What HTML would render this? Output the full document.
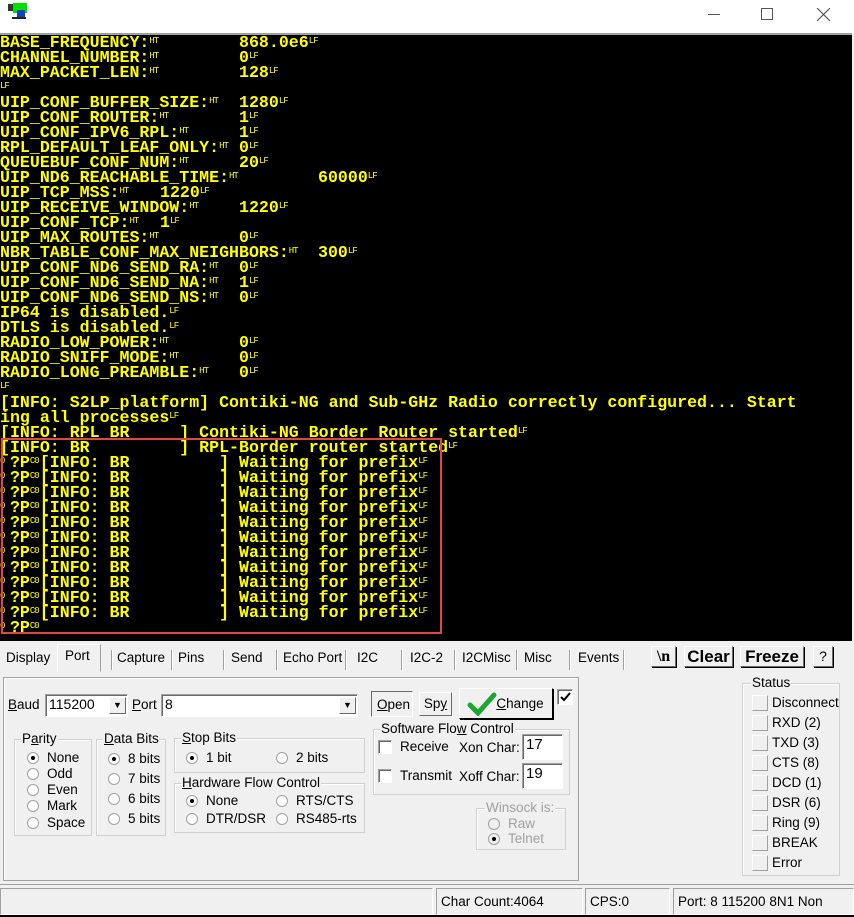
<!DOCTYPE html>
<html><head><meta charset="utf-8"><style>
*{margin:0;padding:0;box-sizing:border-box}
body{width:854px;height:917px;background:#f0f0f0;position:relative;overflow:hidden;font-family:"Liberation Sans",sans-serif;font-size:14px;color:#000}
.a{position:absolute}
#title{left:0;top:0;width:854px;height:33px;background:#fff}
#term{left:0;top:33px;width:852px;height:608px;background:#000;border-top:2px solid #a0a0a0}
.l{position:absolute;left:0;height:15px;line-height:15px;font-family:"Liberation Mono",monospace;font-weight:bold;font-size:16.6px;color:#ffff00;white-space:pre;letter-spacing:0}
.l i{font-style:normal;font-weight:normal;font-size:9px;display:inline-block;width:9.96px;vertical-align:top;line-height:12px;letter-spacing:-1px}
.v{position:absolute;top:0}
#red{left:1px;top:438px;width:441px;height:196px;border:2px solid #e04848}
.tab{position:absolute;top:650px;font-size:13.5px}
.sep{position:absolute;top:650px;width:2px;height:20px;border-left:1px solid #a0a0a0;border-right:1px solid #fff}
.btn{position:absolute;background:#f0f0f0;border:1px solid;border-color:#fff #696969 #696969 #fff;box-shadow:1px 1px 0 #000;text-align:center}
.gb{position:absolute;border:1px solid #d0d0d0;box-shadow:inset 1px 1px 0 #fff}
.gl{position:absolute;background:#f0f0f0;padding:0 1px;font-size:13.5px;line-height:14px;top:-8px;left:6px}
.rd{position:absolute;width:12px;height:12px;border-radius:50%;border:1px solid #a0a0a0;background:#fff}
.rd.on::after{content:"";position:absolute;left:3px;top:3px;width:4px;height:4px;border-radius:50%;background:#000}
.t{position:absolute;font-size:13.5px;white-space:nowrap}
.cb{position:absolute;width:14px;height:14px;border:1px solid;border-color:#a0a0a0 #fff #fff #a0a0a0;background:#fff;box-shadow:inset 1px 1px 0 #696969}
.in{position:absolute;background:#fff;border:1px solid;border-color:#a0a0a0 #fff #fff #a0a0a0;box-shadow:inset 1px 1px 0 #696969;font-size:14px;padding:1px 3px}
.sb{position:absolute;left:752px;width:16px;height:16px;border:1px solid;border-color:#fff #a0a0a0 #a0a0a0 #fff}
.sp{position:absolute;top:888px;height:27px;border:1px solid;border-color:#a0a0a0 #fff #fff #a0a0a0;font-size:13.5px;line-height:25px;padding-left:4px}
u{text-decoration:underline}
</style></head><body>
<div id="title" class="a">
 <div class="a" style="left:8px;top:4px;width:8px;height:7px;background:#333"></div>
 <div class="a" style="left:13px;top:3px;width:14px;height:10px;background:#00e000"></div>
 <div class="a" style="left:17px;top:10px;width:8px;height:7px;background:#1040c0"></div>
 <div class="a" style="left:12px;top:17px;width:14px;height:2px;background:#222"></div>
 <div class="a" style="left:708px;top:14px;width:12px;height:1px;background:#555"></div>
 <div class="a" style="left:761px;top:8px;width:12px;height:12px;border:1px solid #555"></div>
 <svg class="a" style="left:817px;top:8px" width="13" height="13"><path d="M0 0L13 13M13 0L0 13" stroke="#444" stroke-width="1"/></svg>
</div>
<div id="term" class="a">
<div class="l" style="top:0px">BASE_FREQUENCY:<i>HT</i><span class="v" style="left:239px">868.0e6<i>LF</i></span></div>
<div class="l" style="top:15px">CHANNEL_NUMBER:<i>HT</i><span class="v" style="left:239px">0<i>LF</i></span></div>
<div class="l" style="top:30px">MAX_PACKET_LEN:<i>HT</i><span class="v" style="left:239px">128<i>LF</i></span></div>
<div class="l" style="top:45px"><i>LF</i></div>
<div class="l" style="top:60px">UIP_CONF_BUFFER_SIZE:<i>HT</i><span class="v" style="left:239px">1280<i>LF</i></span></div>
<div class="l" style="top:75px">UIP_CONF_ROUTER:<i>HT</i><span class="v" style="left:239px">1<i>LF</i></span></div>
<div class="l" style="top:90px">UIP_CONF_IPV6_RPL:<i>HT</i><span class="v" style="left:239px">1<i>LF</i></span></div>
<div class="l" style="top:105px">RPL_DEFAULT_LEAF_ONLY:<i>HT</i><span class="v" style="left:239px">0<i>LF</i></span></div>
<div class="l" style="top:120px">QUEUEBUF_CONF_NUM:<i>HT</i><span class="v" style="left:239px">20<i>LF</i></span></div>
<div class="l" style="top:135px">UIP_ND6_REACHABLE_TIME:<i>HT</i><span class="v" style="left:318px">60000<i>LF</i></span></div>
<div class="l" style="top:150px">UIP_TCP_MSS:<i>HT</i><span class="v" style="left:160px">1220<i>LF</i></span></div>
<div class="l" style="top:165px">UIP_RECEIVE_WINDOW:<i>HT</i><span class="v" style="left:239px">1220<i>LF</i></span></div>
<div class="l" style="top:180px">UIP_CONF_TCP:<i>HT</i><span class="v" style="left:160px">1<i>LF</i></span></div>
<div class="l" style="top:195px">UIP_MAX_ROUTES:<i>HT</i><span class="v" style="left:239px">0<i>LF</i></span></div>
<div class="l" style="top:210px">NBR_TABLE_CONF_MAX_NEIGHBORS:<i>HT</i><span class="v" style="left:318px">300<i>LF</i></span></div>
<div class="l" style="top:225px">UIP_CONF_ND6_SEND_RA:<i>HT</i><span class="v" style="left:239px">0<i>LF</i></span></div>
<div class="l" style="top:240px">UIP_CONF_ND6_SEND_NA:<i>HT</i><span class="v" style="left:239px">1<i>LF</i></span></div>
<div class="l" style="top:255px">UIP_CONF_ND6_SEND_NS:<i>HT</i><span class="v" style="left:239px">0<i>LF</i></span></div>
<div class="l" style="top:270px">IP64 is disabled.<i>LF</i></div>
<div class="l" style="top:285px">DTLS is disabled.<i>LF</i></div>
<div class="l" style="top:300px">RADIO_LOW_POWER:<i>HT</i><span class="v" style="left:239px">0<i>LF</i></span></div>
<div class="l" style="top:315px">RADIO_SNIFF_MODE:<i>HT</i><span class="v" style="left:239px">0<i>LF</i></span></div>
<div class="l" style="top:330px">RADIO_LONG_PREAMBLE:<i>HT</i><span class="v" style="left:239px">0<i>LF</i></span></div>
<div class="l" style="top:345px"><i>LF</i></div>
<div class="l" style="top:360px">[INFO: S2LP_platform] Contiki-NG and Sub-GHz Radio correctly configured... Start</div>
<div class="l" style="top:375px">ing all processes<i>LF</i></div>
<div class="l" style="top:390px">[INFO: RPL BR     ] Contiki-NG Border Router started<i>LF</i></div>
<div class="l" style="top:405px">[INFO: BR         ] RPL-Border router started<i>LF</i></div>
<div class="l" style="top:420px"><i>0</i>?P<i>C0</i>[INFO: BR         ] Waiting for prefix<i>LF</i></div>
<div class="l" style="top:435px"><i>0</i>?P<i>C0</i>[INFO: BR         ] Waiting for prefix<i>LF</i></div>
<div class="l" style="top:450px"><i>0</i>?P<i>C0</i>[INFO: BR         ] Waiting for prefix<i>LF</i></div>
<div class="l" style="top:465px"><i>0</i>?P<i>C0</i>[INFO: BR         ] Waiting for prefix<i>LF</i></div>
<div class="l" style="top:480px"><i>0</i>?P<i>C0</i>[INFO: BR         ] Waiting for prefix<i>LF</i></div>
<div class="l" style="top:495px"><i>0</i>?P<i>C0</i>[INFO: BR         ] Waiting for prefix<i>LF</i></div>
<div class="l" style="top:510px"><i>0</i>?P<i>C0</i>[INFO: BR         ] Waiting for prefix<i>LF</i></div>
<div class="l" style="top:525px"><i>0</i>?P<i>C0</i>[INFO: BR         ] Waiting for prefix<i>LF</i></div>
<div class="l" style="top:540px"><i>0</i>?P<i>C0</i>[INFO: BR         ] Waiting for prefix<i>LF</i></div>
<div class="l" style="top:555px"><i>0</i>?P<i>C0</i>[INFO: BR         ] Waiting for prefix<i>LF</i></div>
<div class="l" style="top:570px"><i>0</i>?P<i>C0</i>[INFO: BR         ] Waiting for prefix<i>LF</i></div>
<div class="l" style="top:585px"><i>0</i>?P<i>C0</i></div>
</div>
<div id="red" class="a"></div>

<div class="tab" style="left:6px">Display</div>
<div class="a" style="left:57px;top:644px;width:44px;height:28px;border:1px solid;border-color:#fff #a0a0a0 transparent #fff;background:#f0f0f0"></div>
<div class="tab" style="left:65px;top:648px">Port</div>
<div class="sep" style="left:111px"></div><div class="tab" style="left:117px">Capture</div>
<div class="sep" style="left:171px"></div><div class="tab" style="left:178px">Pins</div>
<div class="sep" style="left:223px"></div><div class="tab" style="left:231px">Send</div>
<div class="sep" style="left:276px"></div><div class="tab" style="left:283px">Echo Port</div>
<div class="sep" style="left:345px"></div><div class="tab" style="left:357px">I2C</div>
<div class="sep" style="left:401px"></div><div class="tab" style="left:410px">I2C-2</div>
<div class="sep" style="left:454px"></div><div class="tab" style="left:462px">I2CMisc</div>
<div class="sep" style="left:516px"></div><div class="tab" style="left:524px">Misc</div>
<div class="sep" style="left:569px"></div><div class="tab" style="left:578px">Events</div>
<div class="sep" style="left:623px"></div>
<div class="btn" style="left:651px;top:646px;width:25px;height:21px;font-family:'Liberation Serif',serif;font-weight:bold;font-size:16px;line-height:19px">\n</div>
<div class="btn" style="left:684px;top:646px;width:49px;height:21px;font-weight:bold;font-size:17px;line-height:19px">Clear</div>
<div class="btn" style="left:740px;top:646px;width:64px;height:21px;font-weight:bold;font-size:17px;line-height:19px">Freeze</div>
<div class="btn" style="left:813px;top:646px;width:20px;height:21px;font-size:14px;line-height:19px">?</div>

<div class="gb" style="left:3px;top:677px;width:576px;height:204px;border-color:#a0a0a0"></div>
<div class="t" style="left:8px;top:697px"><u>B</u>aud</div>
<div class="in" style="left:45px;top:694px;width:83px;height:23px">115200</div>
<div class="btn" style="left:109px;top:697px;width:17px;height:17px;box-shadow:none;font-size:9px;line-height:15px">▼</div>
<div class="t" style="left:132px;top:697px"><u>P</u>ort</div>
<div class="in" style="left:161px;top:694px;width:197px;height:23px">8</div>
<div class="btn" style="left:339px;top:697px;width:17px;height:17px;box-shadow:none;font-size:9px;line-height:15px">▼</div>
<div class="a" style="left:371px;top:691px;width:42px;height:26px;border:1px solid;border-color:#696969 #fff #fff #696969"></div>
<div class="t" style="left:377px;top:697px"><u>O</u>pen</div>
<div class="btn" style="left:419px;top:692px;width:33px;height:24px;box-shadow:none;line-height:22px;font-size:13.5px">Sp<u>y</u></div>
<div class="btn" style="left:459px;top:688px;width:94px;height:31px;line-height:29px;padding-left:28px;border-color:#fff #000 #000 #fff;font-size:13.5px"><u>C</u>hange</div>
<svg class="a" style="left:467px;top:692px" width="30" height="24"><path d="M3 13L11 21L27 3" stroke="#1aa830" stroke-width="5" fill="none" stroke-linecap="round"/></svg>
<div class="cb" style="left:557px;top:689px;width:16px;height:16px"></div>
<svg class="a" style="left:560px;top:692px" width="11" height="11"><path d="M1 5L4 8L10 1" stroke="#000" stroke-width="2" fill="none"/></svg>

<div class="gb" style="left:14px;top:739px;width:78px;height:97px"><span class="gl">P<u>a</u>rity</span></div>
<div class="rd on" style="left:27px;top:752px"></div><div class="t" style="left:47px;top:750px">None</div>
<div class="rd" style="left:27px;top:768px"></div><div class="t" style="left:47px;top:766px">Odd</div>
<div class="rd" style="left:27px;top:784px"></div><div class="t" style="left:47px;top:782px">Even</div>
<div class="rd" style="left:27px;top:800px"></div><div class="t" style="left:47px;top:798px">Mark</div>
<div class="rd" style="left:27px;top:817px"></div><div class="t" style="left:47px;top:815px">Space</div>

<div class="gb" style="left:96px;top:739px;width:70px;height:97px"><span class="gl"><u>D</u>ata Bits</span></div>
<div class="rd on" style="left:108px;top:753px"></div><div class="t" style="left:128px;top:751px">8 bits</div>
<div class="rd" style="left:108px;top:773px"></div><div class="t" style="left:128px;top:771px">7 bits</div>
<div class="rd" style="left:108px;top:793px"></div><div class="t" style="left:128px;top:791px">6 bits</div>
<div class="rd" style="left:108px;top:813px"></div><div class="t" style="left:128px;top:811px">5 bits</div>

<div class="gb" style="left:174px;top:738px;width:191px;height:35px"><span class="gl"><u>S</u>top Bits</span></div>
<div class="rd on" style="left:186px;top:752px"></div><div class="t" style="left:206px;top:750px">1 bit</div>
<div class="rd" style="left:276px;top:752px"></div><div class="t" style="left:296px;top:750px">2 bits</div>

<div class="gb" style="left:174px;top:783px;width:191px;height:50px"><span class="gl"><u>H</u>ardware Flow Control</span></div>
<div class="rd on" style="left:186px;top:795px"></div><div class="t" style="left:206px;top:793px">None</div>
<div class="rd" style="left:276px;top:795px"></div><div class="t" style="left:296px;top:793px">RTS/CTS</div>
<div class="rd" style="left:186px;top:813px"></div><div class="t" style="left:206px;top:811px">DTR/DSR</div>
<div class="rd" style="left:276px;top:813px"></div><div class="t" style="left:296px;top:811px">RS485-rts</div>

<div class="gb" style="left:373px;top:729px;width:197px;height:66px"><span class="gl">Software Flo<u>w</u> Control</span></div>
<div class="cb" style="left:378px;top:740px"></div><div class="t" style="left:400px;top:739px">Receive</div>
<div class="t" style="left:459px;top:740px">Xon Char:</div>
<div class="in" style="left:522px;top:734px;width:41px;height:26px;font-size:15px">17</div>
<div class="cb" style="left:378px;top:769px"></div><div class="t" style="left:400px;top:768px">Transmit</div>
<div class="t" style="left:459px;top:769px">Xoff Char:</div>
<div class="in" style="left:522px;top:763px;width:41px;height:26px;font-size:15px">19</div>

<div class="gb" style="left:476px;top:808px;width:90px;height:42px;color:#a0a0a0"><span class="gl" style="left:8px">Winsock is:</span></div>
<div class="rd" style="left:488px;top:818px;background:#f0f0f0"></div><div class="t" style="left:508px;top:816px;color:#a0a0a0">Raw</div>
<div class="rd on" style="left:488px;top:833px;background:#f0f0f0"></div><div class="t" style="left:508px;top:831px;color:#a0a0a0">Telnet</div>

<div class="gb" style="left:742px;top:683px;width:98px;height:193px"><span class="gl" style="left:8px">Status</span></div>
<div class="sb" style="top:695px"></div><div class="t" style="left:772px;top:695px">Disconnect</div>
<div class="sb" style="top:715px"></div><div class="t" style="left:772px;top:715px">RXD (2)</div>
<div class="sb" style="top:735px"></div><div class="t" style="left:772px;top:735px">TXD (3)</div>
<div class="sb" style="top:755px"></div><div class="t" style="left:772px;top:755px">CTS (8)</div>
<div class="sb" style="top:775px"></div><div class="t" style="left:772px;top:775px">DCD (1)</div>
<div class="sb" style="top:795px"></div><div class="t" style="left:772px;top:795px">DSR (6)</div>
<div class="sb" style="top:815px"></div><div class="t" style="left:772px;top:815px">Ring (9)</div>
<div class="sb" style="top:835px"></div><div class="t" style="left:772px;top:835px">BREAK</div>
<div class="sb" style="top:855px"></div><div class="t" style="left:772px;top:855px">Error</div>

<div class="a" style="left:0;top:884px;width:854px;height:1px;background:#a0a0a0"></div>
<div class="sp" style="left:0;width:433px"></div>
<div class="sp" style="left:436px;width:147px">Char Count:4064</div>
<div class="sp" style="left:585px;width:85px">CPS:0</div>
<div class="sp" style="left:673px;width:181px">Port: 8 115200 8N1 Non</div>
<div class="a" style="left:0;top:915px;width:854px;height:2px;background:#000"></div>
</body></html>
